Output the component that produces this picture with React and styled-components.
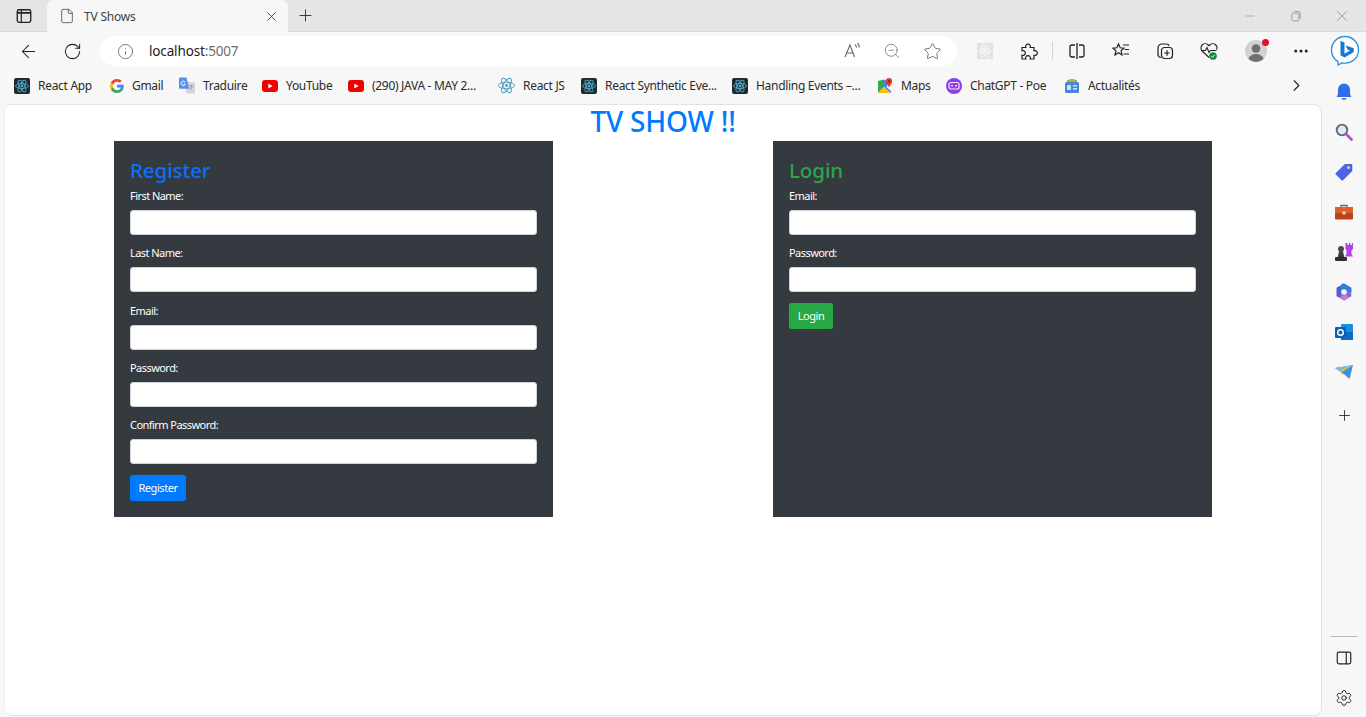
import React from 'react';
import styled, { createGlobalStyle } from 'styled-components';
import {
  File,
  X,
  Plus,
  ArrowLeft,
  RotateCw,
  Info,
  ZoomOut,
  Star,
  ChevronRight,
  Minus,
  Settings,
  MoreHorizontal,
} from 'lucide-react';

const GlobalStyle = createGlobalStyle`
  html, body {
    margin: 0;
    padding: 0;
    height: 100%;
    overflow: hidden;
    background: #f7f7f7;
    font-family: "Noto Sans", "Open Sans", sans-serif;
  }
  * { box-sizing: border-box; }
`;

const Browser = styled.div`
  display: flex;
  flex-direction: column;
  width: 1366px;
  height: 717px;
  overflow: hidden;
`;

const TabStrip = styled.div`
  display: flex;
  align-items: flex-end;
  height: 32px;
  background: #e5e5e5;
  border-bottom: 1px solid #d9d9d9;
`;

const TabAction = styled.div`
  display: flex;
  align-items: center;
  justify-content: center;
  width: ${({ $w }) => $w || 36}px;
  height: 31px;
  margin-left: ${({ $ml }) => $ml || 0}px;
  color: ${({ $color }) => $color || '#222'};
`;

const Tab = styled.div`
  display: flex;
  align-items: center;
  width: 241px;
  height: 32px;
  margin-bottom: -1px;
  margin-left: 5px;
  padding: 0 9px 0 12px;
  background: #f7f7f7;
  border-radius: 7px 7px 0 0;
  color: #444;
`;

const TabTitle = styled.span`
  flex: 1;
  margin-left: 9px;
  font-size: 12px;
  letter-spacing: -0.2px;
`;

const WindowControls = styled.div`
  display: flex;
  margin-left: auto;
  margin-right: 1px;
`;

const WindowButton = styled.div`
  display: flex;
  align-items: center;
  justify-content: center;
  width: 46px;
  height: 31px;
  color: #888;
`;

const Toolbar = styled.div`
  display: flex;
  align-items: center;
  height: 38px;
  padding-left: 6px;
  background: #f7f7f7;
`;

const ToolButton = styled.div`
  display: flex;
  align-items: center;
  justify-content: center;
  flex: none;
  position: relative;
  width: ${({ $w }) => $w || 44}px;
  height: 32px;
  color: #222;
`;

const AddressBar = styled.div`
  display: flex;
  align-items: center;
  width: 857px;
  height: 30px;
  margin: 0 6px;
  padding-left: 17px;
  background: #fff;
  border-radius: 15px;
`;

const Url = styled.div`
  flex: 1;
  margin-left: 15px;
  font-size: 13.5px;
  letter-spacing: -0.15px;
  color: #222;
  span { color: #6d6d6d; }
`;

const AddressIcon = styled.div`
  display: flex;
  justify-content: center;
  width: 40px;
  margin-right: ${({ $mr }) => $mr || 0}px;
  color: #666;
`;

const Separator = styled.div`
  flex: none;
  width: 1px;
  height: 18px;
  margin: 0 2px 0 1px;
  background: #d2d2d2;
`;

const Notify = styled.span`
  position: absolute;
  top: 4px;
  right: 9px;
  width: 7px;
  height: 7px;
  border-radius: 50%;
  background: #e81123;
`;

const Lower = styled.div`
  display: flex;
  flex: 1;
  min-height: 0;
`;

const LeftColumn = styled.div`
  display: flex;
  flex-direction: column;
  width: 1322px;
`;

const Bookmarks = styled.div`
  display: flex;
  align-items: center;
  height: 34px;
  padding: 0 0 3px 14px;
  background: #f7f7f7;
`;

const Bookmark = styled.div`
  display: flex;
  align-items: center;
  flex: none;
  gap: 8px;
  width: ${({ $w }) => $w}px;
  font-size: 12px;
  letter-spacing: -0.3px;
  color: #2b2b2b;
  white-space: nowrap;
  svg { flex: none; }
`;

const BookmarkMore = styled.div`
  display: flex;
  margin-left: auto;
  margin-right: 16px;
  color: #222;
`;

const Page = styled.main`
  flex: 1;
  margin: 0 0 1px 4px;
  background: #fff;
  border: 1px solid #e3e3e3;
  border-left-color: #ececec;
  border-radius: 6px 8px 8px 8px;
`;

const Heading = styled.h1`
  margin: 0;
  height: 36px;
  font-size: 28px;
  line-height: 32px;
  font-weight: 500;
  letter-spacing: -0.2px;
  text-align: center;
  color: #007bff;
`;

const Panels = styled.div`
  display: flex;
  justify-content: space-between;
  width: 1098px;
  margin: 0 auto;
`;

const Panel = styled.section`
  width: 439px;
  height: 376px;
  padding: 16px;
  background: #343a40;
`;

const PanelTitle = styled.h2`
  margin: 0 0 4px;
  height: 27px;
  font-size: 20.5px;
  line-height: 27px;
  font-weight: 500;
  letter-spacing: -0.1px;
  color: ${({ $color }) => $color};
`;

const Field = styled.div`
  display: flex;
  flex-direction: column;
  height: 57.25px;
`;

const Label = styled.label`
  height: 22px;
  font-size: 11px;
  line-height: 16px;
  letter-spacing: -0.55px;
  color: #fff;
`;

const Input = styled.input`
  display: block;
  width: 100%;
  height: 25px;
  padding: 0 8px;
  background: #fff;
  border: 1px solid #ced4da;
  border-radius: 3px;
  outline: none;
`;

const SubmitButton = styled.button`
  display: block;
  height: 26px;
  padding: 0 0 2px;
  width: ${({ $w }) => $w}px;
  margin-top: 0.75px;
  background: ${({ $color }) => $color};
  border: none;
  border-radius: 2px;
  font-family: inherit;
  font-size: 11px;
  letter-spacing: -0.45px;
  color: #fff;
`;

const Sidebar = styled.aside`
  display: flex;
  flex-direction: column;
  align-items: center;
  flex: 1;
  padding-top: 2px;
  background: #f7f7f7;
`;

const SideItem = styled.div`
  display: flex;
  align-items: center;
  justify-content: center;
  flex: none;
  width: 100%;
  height: ${({ $h }) => $h || 40}px;
  color: #222;
`;

const SideRule = styled.div`
  width: 28px;
  height: 1px;
  margin-top: auto;
  margin-bottom: 1px;
  background: #bdbdbd;
`;

/* tiles and logos */

const Atom = ({ color = '#5fb6d6', rx = 6.4, ry = 2.6 }) => (
  <g fill="none" stroke={color} strokeWidth="0.9">
    <ellipse cx="8" cy="8" rx={rx} ry={ry} />
    <ellipse cx="8" cy="8" rx={rx} ry={ry} transform="rotate(60 8 8)" />
    <ellipse cx="8" cy="8" rx={rx} ry={ry} transform="rotate(120 8 8)" />
    <circle cx="8" cy="8" r="1.4" fill={color} stroke="none" />
  </g>
);

const ReactTile = () => (
  <svg width="16" height="16" viewBox="0 0 16 16">
    <rect width="16" height="16" rx="2" fill="#1e2a30" />
    <Atom color="#4fa9c4" />
  </svg>
);

const ReactPlain = () => (
  <svg width="17" height="17" viewBox="0 0 16 16">
    <Atom color="#4a9dc0" rx={7.6} ry={3.1} />
  </svg>
);

const GoogleG = () => (
  <svg width="14" height="14" viewBox="0 0 48 48">
    <path fill="#EA4335" d="M24 9.5c3.5 0 6.7 1.2 9.2 3.6l6.9-6.9C35.9 2.4 30.5 0 24 0 14.6 0 6.5 5.4 2.6 13.2l8 6.2C12.500 13.600 17.800 9.500 24 9.500z" />
    <path fill="#4285F4" d="M47 24.500c0-1.600-.1-3.100-.4-4.500H24v9h12.900c-.6 3-2.200 5.500-4.700 7.200l7.700 6C44.400 38.100 47 31.900 47 24.500z" />
    <path fill="#FBBC05" d="M10.600 28.600c-.5-1.400-.8-3-.8-4.600s.3-3.200.8-4.600l-8-6.200C.9 16.500 0 20.100 0 24s.9 7.500 2.600 10.800l8-6.200z" />
    <path fill="#34A853" d="M24 48c6.500 0 11.900-2.100 15.900-5.800l-7.700-6c-2.100 1.400-4.900 2.300-8.200 2.300-6.200 0-11.500-4.100-13.400-9.900l-8 6.200C6.500 42.600 14.600 48 24 48z" />
  </svg>
);

const Translate = () => (
  <svg width="16" height="17" viewBox="0 0 17 17">
    <path d="M7 5h9a1 1 0 0 1 1 1v10a1 1 0 0 1-1 1H8z" fill="#d5d5d5" />
    <path d="M1 0h7l3 12H1a1 1 0 0 1-1-1V1a1 1 0 0 1 1-1z" fill="#5a8fe6" />
    <path d="M11.500 9h3M13 8v1M12 13l2-3" stroke="#777" strokeWidth="0.8" fill="none" />
    <path d="M6.500 5a2.300 2.300 0 1 0 .2 2H4.800" stroke="#fff" strokeWidth="1" fill="none" />
  </svg>
);

const YouTube = () => (
  <svg width="16" height="12" viewBox="0 0 16 12">
    <rect width="16" height="12" rx="3" fill="#f00000" />
    <path d="M6.300 3.500v5l4.300-2.500z" fill="#fff" />
  </svg>
);

const Maps = () => (
  <svg width="16" height="16" viewBox="0 0 16 16">
    <path d="M1 3l6-1.500V9l-6 6z" fill="#34a853" />
    <path d="M1 15l6-6 7 6z" fill="#fbbc05" />
    <path d="M7 1.500L10 3v6.500L7 9z" fill="#4285f4" />
    <path d="M7 9l3 .5 4 3.500v2z" fill="#4285f4" />
    <path d="M12 0a3.200 3.200 0 0 0-3.200 3.200C8.800 5.500 12 9 12 9s3.200-3.500 3.200-5.800A3.200 3.200 0 0 0 12 0z" fill="#db3f34" />
    <circle cx="12" cy="3.200" r="1.100" fill="#8e1c14" />
  </svg>
);

const Poe = () => (
  <svg width="16" height="16" viewBox="0 0 16 16">
    <circle cx="8" cy="8" r="8" fill="#8d3fe8" />
    <rect x="3" y="4.500" width="10" height="6.500" rx="2" fill="none" stroke="#f3e8ff" strokeWidth="1.200" />
    <circle cx="6" cy="7.700" r="0.900" fill="#f3e8ff" />
    <circle cx="10" cy="7.700" r="0.900" fill="#f3e8ff" />
  </svg>
);

const News = () => (
  <svg width="16" height="16" viewBox="0 0 16 16">
    <path d="M3 2h10v3H3z" fill="#7cb56d" />
    <path d="M5 1h6v2H5z" fill="#d9a83a" />
    <rect x="1" y="4" width="14" height="11" rx="1.500" fill="#4a86d8" />
    <rect x="3" y="7" width="4" height="5" rx="1" fill="#cfe0f7" />
    <rect x="9" y="7" width="4" height="1.500" fill="#cfe0f7" />
    <rect x="9" y="10" width="4" height="1.500" fill="#cfe0f7" />
  </svg>
);

const Bing = () => (
  <svg width="30" height="32" viewBox="0 0 30 32">
    <path d="M15 1.500C7.300 1.500 1.500 7.500 1.500 15c0 5 2.500 9.200 6.500 11.600V30l4.200-2.200c1 .2 1.900.3 2.800.3 7.700 0 13.500-5.800 13.500-13.100S22.700 1.500 15 1.500z" fill="#fff" stroke="#2d8fd8" strokeWidth="1.300" />
    <path d="M10.500 6l4 1.400v11.400l5.500-3.200-2.600-1.200-1.600-4 8 2.800v3.800l-9.300 5.500-4-2.200z" fill="#1877d2" />
  </svg>
);

const SideBell = () => (
  <svg width="18" height="18" viewBox="0 0 18 18">
    <path d="M9 0.500a6 6 0 0 0-6 6v4.500l-1.500 3h15l-1.500-3V6.500a6 6 0 0 0-6-6z" fill="#2f6fed" />
    <path d="M6.500 15h5a2.500 2 0 0 1-5 0z" fill="#6b7894" />
  </svg>
);

const SideSearch = () => (
  <svg width="18" height="18" viewBox="0 0 18 18">
    <circle cx="7" cy="7" r="5.300" fill="#dfeaf2" stroke="#5f6770" strokeWidth="1.800" />
    <path d="M11 11l5.500 5.500" stroke="#b14bd6" strokeWidth="2.600" strokeLinecap="round" />
  </svg>
);

const SideTag = () => (
  <svg width="18" height="18" viewBox="0 0 18 18">
    <path d="M10 1h6.500a.8.8 0 0 1 .8.8V8L8 17.200a1 1 0 0 1-1.400 0L.8 11.400a1 1 0 0 1 0-1.400z" fill="#4b63e6" />
    <circle cx="13.500" cy="4.500" r="1.500" fill="#f5d76e" />
  </svg>
);

const SideTools = () => (
  <svg width="18" height="16" viewBox="0 0 18 16">
    <path d="M6 3V1.500h6V3" fill="none" stroke="#9a5a3c" strokeWidth="1.300" />
    <rect y="3" width="18" height="6" fill="#e0602c" />
    <rect y="9" width="18" height="6.500" rx="1" fill="#b8431c" />
    <rect x="7.500" y="7.500" width="3" height="3" fill="#f3d9c8" />
  </svg>
);

const SideGames = () => (
  <svg width="18" height="18" viewBox="0 0 18 18">
    <path d="M10.500 0h2v2h1.500V0h1.500v2H17V0h1v6l-1.500 1.500V11l1.500 2.500H10L11.500 11V7.500L10.500 6z" fill="#b343e8" />
    <circle cx="6" cy="6" r="3" fill="#4a4a4a" />
    <path d="M4 8.500h4l1.200 5.500H2.800z" fill="#3c3c3c" />
    <rect y="14" width="12" height="4" rx="1" fill="#2e2e2e" />
  </svg>
);

const SideCopilot = () => (
  <svg width="18" height="18" viewBox="0 0 18 18">
    <path d="M9 0.500l7.300 4.200v8.600L9 17.500l-7.300-4.200V4.700z" fill="#8a6ad8" />
    <path d="M7 0.800L9 .5l7.300 4.200v4.300H12a3 3 0 0 0-3-3H3z" fill="#2f7fe0" />
    <path d="M1.700 4.700L5 3 6.500 9 5 14 1.700 13.300z" fill="#4a5fd0" />
    <path d="M5 14l4 3.500 4.500-2.500L11 11.500z" fill="#c77bd8" />
    <circle cx="9" cy="9" r="2.800" fill="#f4f4fb" />
  </svg>
);

const SideOutlook = () => (
  <svg width="18" height="18" viewBox="0 0 18 18">
    <rect x="6" y="1" width="12" height="16" rx="1" fill="#1490df" />
    <path d="M6 9h12v8H6z" fill="#0f6cbd" />
    <rect x="0" y="4" width="11" height="11" rx="1" fill="#0364b8" />
    <circle cx="5.500" cy="9.500" r="2.800" fill="none" stroke="#fff" strokeWidth="1.400" />
  </svg>
);

const SideSend = () => (
  <svg width="18" height="14" viewBox="0 0 18 14">
    <path d="M0 3l18-3-3.500 14-4.500-4z" fill="#3a93e0" />
    <path d="M0 3l18-3L7 7z" fill="#6fc0ee" />
    <path d="M5 5L18 0 7 7l1 5z" fill="#f0b63a" />
  </svg>
);

const Health = () => (
  <svg width="20" height="20" viewBox="0 0 20 20" fill="none">
    <path d="M10 16.500L3.200 10a4.200 4.200 0 0 1 0-6 4.300 4.300 0 0 1 6 0l.8.800.8-.8a4.300 4.300 0 0 1 6 0 4.200 4.200 0 0 1 .9 4.600" stroke="#222" strokeWidth="1.100" />
    <path d="M2 9.500h4.500l1.500-3 2 5 1.500-2h6" stroke="#222" strokeWidth="1.100" />
    <circle cx="14" cy="15" r="3.800" fill="#10893e" />
    <path d="M12.200 15l1.300 1.300 2.400-2.500" stroke="#fff" strokeWidth="1" />
  </svg>
);

const Avatar = () => (
  <svg width="22" height="22" viewBox="0 0 22 22">
    <circle cx="11" cy="11" r="11" fill="#d2d2d2" />
    <circle cx="11" cy="8.500" r="4.300" fill="#6f6f6f" />
    <path d="M3.500 19c1-3.500 4-5 7.500-5s6.500 1.500 7.500 5a11 11 0 0 1-15 0z" fill="#6f6f6f" />
  </svg>
);

const Line = ({ size = 20, children }) => (
  <svg width={size} height={size} viewBox="0 0 20 20" fill="none" stroke="currentColor" strokeWidth="1.100">
    {children}
  </svg>
);

const bookmarks = [
  { w: 96, icon: <ReactTile />, label: 'React App' },
  { w: 69, icon: <GoogleG />, label: 'Gmail' },
  { w: 83, icon: <Translate />, label: 'Traduire' },
  { w: 86, icon: <YouTube />, label: 'YouTube' },
  { w: 150, icon: <YouTube />, label: '(290) JAVA - MAY 2...' },
  { w: 83, icon: <ReactPlain />, label: 'React JS' },
  { w: 151, icon: <ReactTile />, label: 'React Synthetic Eve...' },
  { w: 145, icon: <ReactTile />, label: 'Handling Events –...' },
  { w: 69, icon: <Maps />, label: 'Maps' },
  { w: 118, icon: <Poe />, label: 'ChatGPT - Poe' },
  { w: 100, icon: <News />, label: 'Actualités' },
];

const registerFields = ['First Name:', 'Last Name:', 'Email:', 'Password:', 'Confirm Password:'];
const loginFields = ['Email:', 'Password:'];

const FormPanel = ({ title, color, buttonColor, fields, buttonWidth }) => (
  <Panel>
    <PanelTitle $color={color}>{title}</PanelTitle>
    {fields.map((field) => (
      <Field key={field}>
        <Label>{field}</Label>
        <Input />
      </Field>
    ))}
    <SubmitButton $color={buttonColor} $w={buttonWidth}>
      {title}
    </SubmitButton>
  </Panel>
);

const App = () => (
  <>
    <GlobalStyle />
    <Browser>
      <TabStrip>
        <TabAction $ml={6}>
          <Line size={18}>
            <rect x="2.500" y="3" width="15" height="14" rx="2" strokeWidth="1.500" />
            <path d="M7 3v14" strokeWidth="1.300" />
            <path d="M2.500 6.500h15" strokeWidth="2" />
          </Line>
        </TabAction>
        <Tab>
          <File size={16} strokeWidth={1.2} />
          <TabTitle>TV Shows</TabTitle>
          <X size={15} strokeWidth={1.3} color="#333" />
        </Tab>
        <TabAction $w={34}>
          <Plus size={19} strokeWidth={1.1} />
        </TabAction>
        <WindowControls>
          <WindowButton>
            <Minus size={14} strokeWidth={1} />
          </WindowButton>
          <WindowButton>
            <Line size={14}>
              <rect x="4" y="6" width="10" height="11" rx="2" />
              <path d="M7 3.500h6a3 3 0 0 1 3 3V14" />
            </Line>
          </WindowButton>
          <WindowButton>
            <X size={18} strokeWidth={1} />
          </WindowButton>
        </WindowControls>
      </TabStrip>

      <Toolbar>
        <ToolButton>
          <ArrowLeft size={21} strokeWidth={1.2} />
        </ToolButton>
        <ToolButton>
          <RotateCw size={19} strokeWidth={1.3} />
        </ToolButton>
        <AddressBar>
          <Info size={17} strokeWidth={1.1} color="#555" />
          <Url>
            localhost<span>:5007</span>
          </Url>
          <AddressIcon>
            <Line>
              <path d="M3 16L8 4l4.500 12M4.700 12h6.300" />
              <path d="M13 3.500a4 4 0 0 1 1.500 3M15.500 2a6 6 0 0 1 1.800 4.500" />
            </Line>
          </AddressIcon>
          <AddressIcon>
            <ZoomOut size={18} strokeWidth={1} />
          </AddressIcon>
          <AddressIcon $mr={5}>
            <Star size={19} strokeWidth={1.1} />
          </AddressIcon>
        </AddressBar>
        <ToolButton>
          <svg width="16" height="16" viewBox="0 0 16 16">
            <rect width="16" height="16" fill="#e2e2e2" />
            <Atom color="#f6f6f6" />
          </svg>
        </ToolButton>
        <ToolButton>
          <Line>
            <path d="M3 6.500h3.800a2.400 2.400 0 1 1 4.400 0H15v3.300a2.400 2.400 0 1 1 0 4.400V18h-3.800a2.400 2.400 0 1 0-4.400 0H3v-3.800a2.400 2.400 0 1 0 0-4.400z" strokeWidth="1.200" />
          </Line>
        </ToolButton>
        <Separator />
        <ToolButton>
          <Line>
            <path d="M8 4H5a2 2 0 0 0-2 2v8a2 2 0 0 0 2 2h3M12 4h3a2 2 0 0 1 2 2v8a2 2 0 0 1-2 2h-3M10 2v16" strokeWidth="1.300" />
          </Line>
        </ToolButton>
        <ToolButton>
          <Line>
            <path d="M7.500 3l1.700 3.800 3.800.4-2.900 2.600.9 4.200-3.500-2.200L4 14l.9-4.200L2 7.200l3.800-.4z" strokeWidth="1.200" />
            <path d="M12 4h6M14 8.500h4M12.500 13h5.500" strokeWidth="1.200" />
          </Line>
        </ToolButton>
        <ToolButton>
          <Line>
            <path d="M6 16.500a3 3 0 0 1-3-3V7a4 4 0 0 1 4-4h4.500A2.500 2.500 0 0 1 14 5" strokeWidth="1.200" />
            <rect x="6.500" y="6.500" width="11" height="11" rx="3" strokeWidth="1.200" />
            <path d="M12 9.200v5.600M9.200 12h5.600" strokeWidth="1.200" />
          </Line>
        </ToolButton>
        <ToolButton>
          <Health />
        </ToolButton>
        <ToolButton $w={3} />
        <ToolButton>
          <Avatar />
          <Notify />
        </ToolButton>
        <ToolButton $w={1} />
        <ToolButton>
          <MoreHorizontal size={18} strokeWidth={2} />
        </ToolButton>
        <ToolButton $w={43}>
          <Bing />
        </ToolButton>
      </Toolbar>

      <Lower>
        <LeftColumn>
          <Bookmarks>
            {bookmarks.map((item) => (
              <Bookmark key={item.label} $w={item.w}>
                {item.icon}
                {item.label}
              </Bookmark>
            ))}
            <BookmarkMore>
              <ChevronRight size={19} strokeWidth={1.4} />
            </BookmarkMore>
          </Bookmarks>
          <Page>
            <Heading>TV SHOW !!</Heading>
            <Panels>
              <FormPanel title="Register" color="#0d6efd" buttonColor="#007bff" fields={registerFields} buttonWidth={56} />
              <FormPanel title="Login" color="#28a745" buttonColor="#28a745" fields={loginFields} buttonWidth={44} />
            </Panels>
          </Page>
        </LeftColumn>
        <Sidebar>
          <SideItem><SideBell /></SideItem>
          <SideItem><SideSearch /></SideItem>
          <SideItem><SideTag /></SideItem>
          <SideItem><SideTools /></SideItem>
          <SideItem><SideGames /></SideItem>
          <SideItem><SideCopilot /></SideItem>
          <SideItem><SideOutlook /></SideItem>
          <SideItem><SideSend /></SideItem>
          <SideItem $h={46}>
            <Plus size={17} strokeWidth={1.2} />
          </SideItem>
          <SideRule />
          <SideItem>
            <Line size={18}>
              <rect x="2.500" y="3.500" width="15" height="13" rx="2" strokeWidth="1.300" />
              <path d="M12.500 3.500v13" strokeWidth="1.300" />
            </Line>
          </SideItem>
          <SideItem $h={39}>
            <Settings size={18} strokeWidth={1.3} />
          </SideItem>
        </Sidebar>
      </Lower>
    </Browser>
  </>
);

export default App;
